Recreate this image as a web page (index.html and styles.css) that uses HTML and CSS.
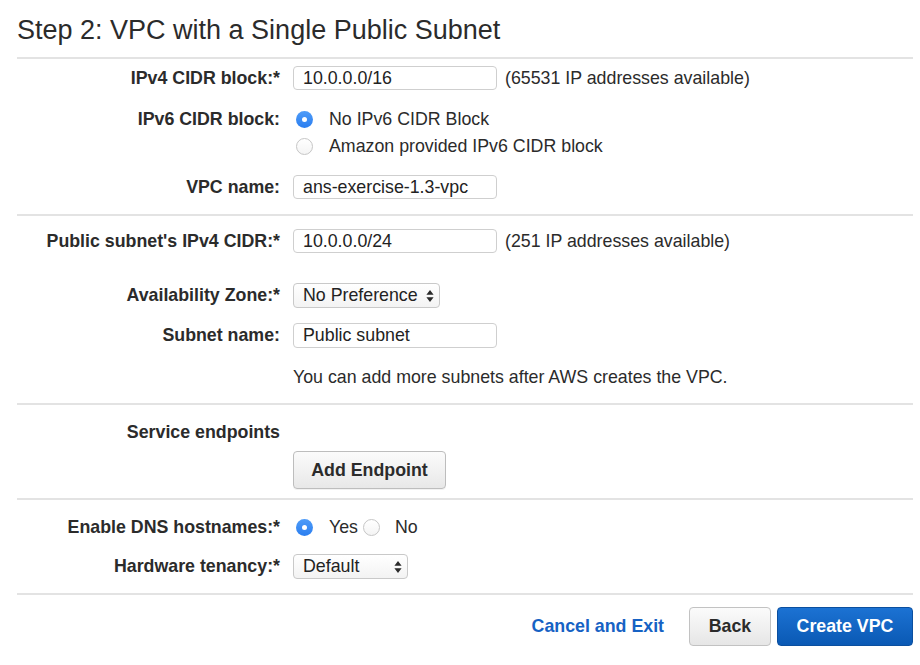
FILE: index.html
```html
<!DOCTYPE html>
<html>
<head>
<meta charset="utf-8">
<link rel="stylesheet" href="styles.css">
</head>
<body>
<div class="page">
  <h1 class="title">Step 2: VPC with a Single Public Subnet</h1>

  <section class="section s1">
    <div class="row r-ipv4">
      <div class="label">IPv4 CIDR block:*</div>
      <div class="input">10.0.0.0/16</div>
      <div class="hint">(65531 IP addresses available)</div>
    </div>
    <div class="row r-ipv6 top">
      <div class="label radio-label">IPv6 CIDR block:</div>
      <div class="radios">
        <div class="radio-line"><span class="radio checked"></span><span>No IPv6 CIDR Block</span></div>
        <div class="radio-line"><span class="radio"></span><span>Amazon provided IPv6 CIDR block</span></div>
      </div>
    </div>
    <div class="row r-vpcname">
      <div class="label">VPC name:</div>
      <div class="input">ans-exercise-1.3-vpc</div>
    </div>
  </section>

  <section class="section s2">
    <div class="row r-subnet">
      <div class="label">Public subnet's IPv4 CIDR:*</div>
      <div class="input">10.0.0.0/24</div>
      <div class="hint">(251 IP addresses available)</div>
    </div>
    <div class="row r-az">
      <div class="label">Availability Zone:*</div>
      <div class="select sel-az"><span>No Preference</span>
        <svg class="arrows" width="8" height="14" viewBox="0 0 8 14"><path d="M4 1 L7.6 5.8 L0.4 5.8 Z M4 13 L7.6 8.2 L0.4 8.2 Z" fill="#2b2b2b"/></svg>
      </div>
    </div>
    <div class="row r-subname">
      <div class="label">Subnet name:</div>
      <div class="input">Public subnet</div>
    </div>
    <div class="row r-note">
      <div class="label"></div>
      <div class="note">You can add more subnets after AWS creates the VPC.</div>
    </div>
  </section>

  <section class="section s3">
    <div class="row r-endpoints">
      <div class="label">Service endpoints</div>
    </div>
    <div class="row r-addbtn">
      <div class="label"></div>
      <button class="btn btn-add">Add Endpoint</button>
    </div>
  </section>

  <section class="section s4">
    <div class="row r-dns">
      <div class="label">Enable DNS hostnames:*</div>
      <div class="inline-radios">
        <span class="radio checked"></span><span class="opt-yes">Yes</span>
        <span class="radio r-no"></span><span class="opt-no">No</span>
      </div>
    </div>
    <div class="row r-tenancy">
      <div class="label">Hardware tenancy:*</div>
      <div class="select sel-ten"><span>Default</span>
        <svg class="arrows" width="8" height="14" viewBox="0 0 8 14"><path d="M4 1 L7.6 5.8 L0.4 5.8 Z M4 13 L7.6 8.2 L0.4 8.2 Z" fill="#2b2b2b"/></svg>
      </div>
    </div>
  </section>

  <footer class="section footer">
    <a class="cancel">Cancel and Exit</a>
    <button class="btn btn-back">Back</button>
    <button class="btn btn-create">Create VPC</button>
  </footer>
</div>
</body>
</html>
```

FILE: styles.css
```css
html, body {
  margin: 0;
  padding: 0;
  background: #ffffff;
}

body {
  font-family: "Liberation Sans", Arial, Helvetica, sans-serif;
  color: #2b2b2b;
  font-size: 17.8px;
}

.page {
  margin-left: 17px;
  width: 896px;
}

.title {
  margin: 0;
  padding-top: 15px;
  font-size: 27px;
  font-weight: normal;
  line-height: 31px;
  height: 31px;
  margin-bottom: 11px;
  color: #2b2b2b;
}

.section {
  border-top: 2px solid #e3e3e3;
}

.row {
  display: flex;
  align-items: center;
}

.row.top {
  align-items: flex-start;
}

.label {
  width: 263px;
  margin-right: 13px;
  flex-shrink: 0;
  text-align: right;
  font-weight: bold;
  color: #2b2b2b;
}

.input {
  box-sizing: border-box;
  width: 204px;
  height: 24px;
  line-height: 22px;
  border: 1px solid #cfcfcf;
  border-radius: 4px;
  padding-left: 9px;
  background: #fff;
  color: #222;
  white-space: nowrap;
}

.hint {
  margin-left: 8px;
  color: #2b2b2b;
}

.radios {
  display: flex;
  flex-direction: column;
}

.radio-line {
  display: flex;
  align-items: center;
  height: 27px;
}

.radio-label {
  line-height: 27px;
}

.radio {
  box-sizing: border-box;
  display: inline-block;
  width: 17px;
  height: 17px;
  border-radius: 50%;
  border: 1px solid #c6c6c6;
  background: linear-gradient(#ffffff, #f4f4f4);
  margin-left: 3px;
  margin-right: 16px;
  position: relative;
  flex-shrink: 0;
}

.radio.checked {
  border: none;
  background: linear-gradient(#4f9cf8, #2a7ef0);
}

.radio.checked::after {
  content: "";
  position: absolute;
  left: 6px;
  top: 6px;
  width: 5px;
  height: 5px;
  border-radius: 50%;
  background: #fff;
}

/* section 1 */
.s1 .r-ipv4 { margin-top: 7px; height: 24px; }
.s1 .r-ipv6 { margin-top: 16px; }
.s1 .r-vpcname { margin-top: 15px; height: 24px; }
.s1 { padding-bottom: 15px; }

/* section 2 */
.s2 .r-subnet { margin-top: 13px; height: 24px; }
.s2 .r-az { margin-top: 30px; height: 25px; }
.s2 .r-subname { margin-top: 15px; height: 25px; }
.s2 .r-subname .input { height: 25px; line-height: 23px; }
.s2 .r-note { margin-top: 17px; height: 24px; }
.s2 { padding-bottom: 14px; }

.note {
  color: #2b2b2b;
}

.select {
  box-sizing: border-box;
  height: 25px;
  border: 1px solid #c9c9c9;
  border-radius: 4px;
  background: linear-gradient(#ffffff, #f3f3f3);
  display: flex;
  align-items: center;
  justify-content: space-between;
  padding-left: 9px;
  padding-right: 5px;
  color: #222;
}

.sel-az { width: 147px; }
.sel-ten { width: 115px; }

.arrows {
  display: block;
}

/* section 3 */
.s3 .r-endpoints { margin-top: 15px; height: 24px; }
.s3 .r-addbtn { margin-top: 7px; height: 38px; }
.s3 { padding-bottom: 9px; }

.btn {
  box-sizing: border-box;
  font-family: "Liberation Sans", Arial, Helvetica, sans-serif;
  font-weight: bold;
  font-size: 17.8px;
  border-radius: 4px;
  cursor: pointer;
  margin: 0;
  padding: 0;
}

.btn-add {
  width: 153px;
  height: 38px;
  border: 1px solid #bdbdbd;
  background: linear-gradient(#fbfbfb, #e8e8e8);
  color: #2b2b2b;
  box-shadow: 0 1px 0 rgba(0,0,0,0.05);
}

/* section 4 */
.s4 .r-dns { margin-top: 15px; height: 24px; }
.s4 .r-tenancy { margin-top: 15px; height: 25px; }
.s4 { padding-bottom: 14px; }

.inline-radios {
  display: flex;
  align-items: center;
}

.inline-radios .opt-yes { margin-right: 5px; }
.inline-radios .r-no { margin-left: 0; margin-right: 15px; }

/* footer */
.footer {
  display: flex;
  justify-content: flex-end;
  align-items: center;
  padding-top: 12px;
}

.cancel {
  color: #1662c4;
  font-weight: bold;
  margin-right: 25px;
  cursor: pointer;
}

.btn-back {
  width: 82px;
  height: 39px;
  border: 1px solid #c2c2c2;
  background: linear-gradient(#fbfbfb, #e6e6e6);
  color: #2b2b2b;
  margin-right: 6px;
}

.btn-create {
  width: 136px;
  height: 39px;
  border: 1px solid #0b4f9f;
  background: linear-gradient(#1c72d3, #0a59b4);
  color: #ffffff;
}
```
